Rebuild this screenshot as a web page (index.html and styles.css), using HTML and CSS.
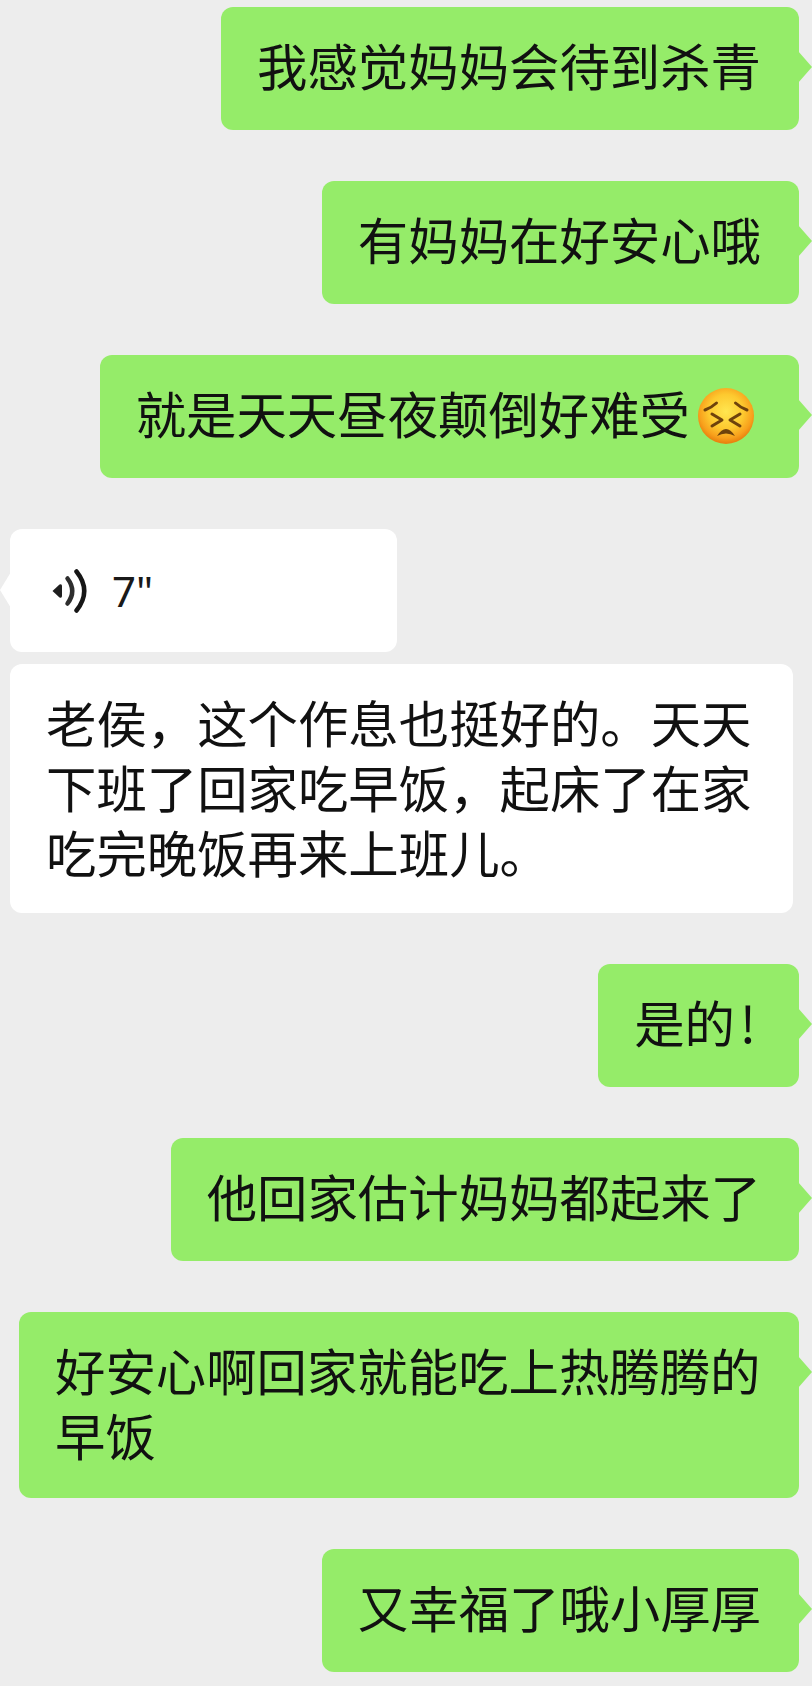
FILE: index.html
```html
<!DOCTYPE html>
<html lang="zh-CN">
<head>
  <meta charset="UTF-8"/>
  <meta name="viewport" content="width=device-width, initial-scale=1.0"/>
  <title>聊天记录</title>
  <link rel="stylesheet" href="styles.css">
</head>
<body>

  <div class="chat">
    <div class="bubble me">我感觉妈妈会待到杀青</div>
    <div class="bubble me">有妈妈在好安心哦</div>
    <div class="bubble me">就是天天昼夜颠倒好难受<svg class="emoji" viewBox="0 0 56 56">
        <defs>
          <radialGradient id="face" cx="50%" cy="42%" r="56%">
            <stop offset="0%" stop-color="#ffe650"/>
            <stop offset="55%" stop-color="#fdc92f"/>
            <stop offset="85%" stop-color="#f8a01c"/>
            <stop offset="100%" stop-color="#e9830f"/>
          </radialGradient>
        </defs>
        <circle cx="28" cy="28" r="28" fill="url(#face)"/>
        <g fill="none" stroke="#6e420c" stroke-width="3" stroke-linecap="round" stroke-linejoin="round">
          <path d="M7 22 Q13 20 18.500 15"/>
          <path d="M37.500 15 Q43 20 49 22"/>
          <path d="M14 26 L24 32 L14 38"/>
          <path d="M42 26 L32 32 L42 38"/>
        </g>
        <path d="M19 48 Q28 34 37 48 Q28 43 19 48Z" fill="#6e420c"/>
      </svg></div>

    <div class="bubble other voice">
      <svg class="voice-icon" viewBox="0 0 36 44">
        <path d="M0.500 22 L7.500 15.500 Q10 14.500 10 17 L10 27 Q10 29.500 7.500 28.500 Z" fill="#1f1f1f"/>
        <path d="M15.500 9.500 Q25 22 15.500 34.500" fill="none" stroke="#2e2e2e" stroke-width="4.500" stroke-linecap="round"/>
        <path d="M24.500 2.500 Q40 22 24.500 41.500" fill="none" stroke="#161616" stroke-width="4.500" stroke-linecap="round"/>
      </svg>
      <span class="duration">7"</span>
    </div>
    <div class="bubble other multi follow">老侯，这个作息也挺好的。天天下班了回家吃早饭，起床了在家吃完晚饭再来上班儿。</div>

    <div class="bubble me">是的<span class="bang">!</span></div>
    <div class="bubble me">他回家估计妈妈都起来了</div>
    <div class="bubble me multi">好安心啊回家就能吃上热腾腾的早饭</div>
    <div class="bubble me">又幸福了哦小厚厚</div>
  </div>

</body>
</html>
```

FILE: styles.css
```css
* {
  box-sizing: border-box;
  margin: 0; padding: 0;
}

body {
  background: #ededed;
  font-family: "Noto Sans CJK SC", "Noto Sans", sans-serif;
  color: #111;
}

.chat {
  display: flex;
  flex-direction: column;
  padding: 7px 13px 14px 10px;
  gap: 51px;
}

.bubble {
  position: relative;
  max-width: 780px;
  padding: 26px 38px 34px 36px;
  border-radius: 12px;
  font-size: 50.4px;
  line-height: 63px;
  min-height: 123px;
}

.bubble.me {
  align-self: flex-end;
  background: #95ec69;
}

.bubble.other {
  align-self: flex-start;
  background: #fff;
}

.bubble.multi {
  line-height: 65px;
  padding-top: 25px;
  padding-bottom: 31px;
}

.bubble.follow {
  max-width: 783px;
  margin-top: -39px;
  padding-bottom: 29px;
}

/* little triangle on the side of a bubble */
.bubble.me::after {
  content: "";
  position: absolute;
  top: 44px;
  right: -13px;
  width: 14px;
  height: 32px;
  background: #95ec69;
  clip-path: polygon(0 0, 100% 50%, 0 100%);
}

.bubble.voice::before {
  content: "";
  position: absolute;
  top: 43px;
  left: -10px;
  width: 11px;
  height: 36px;
  background: #fff;
  clip-path: polygon(100% 0, 0 50%, 100% 100%);
}

.emoji {
  display: inline-block;
  width: 56px;
  height: 56px;
  margin: 0 7px 0 8px;
  vertical-align: -10px;
}

.bang {
  display: inline-block;
  width: 26px;
  text-align: center;
}

.voice {
  display: flex;
  align-items: center;
  width: 387px;
  padding: 0 0 0 42px;
}

.voice-icon {
  width: 36px;
  height: 44px;
}

.duration {
  margin-left: 24px;
  font-family: "Noto Sans", sans-serif;
  font-size: 42px;
  line-height: 1;
  color: #191919;
}
```
